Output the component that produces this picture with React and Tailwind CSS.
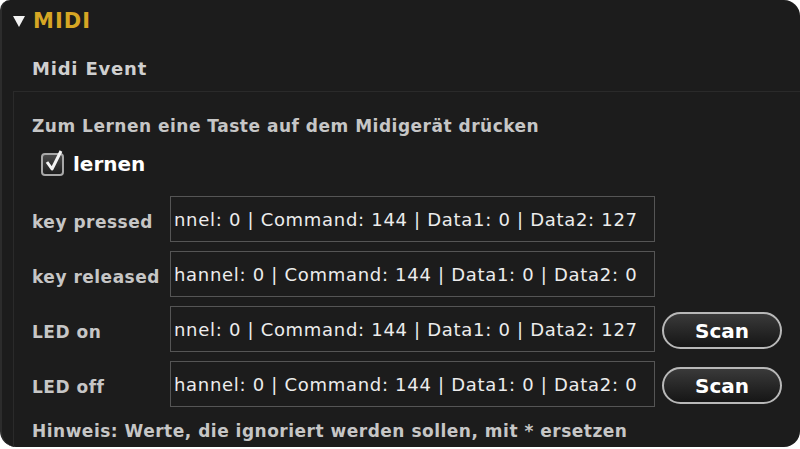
import React from 'react';

const rows = [
  { label: 'key pressed', value: 'nnel: 0 | Command: 144 | Data1: 0 | Data2: 127', scan: false },
  { label: 'key released', value: 'hannel: 0 | Command: 144 | Data1: 0 | Data2: 0', scan: false },
  { label: 'LED on', value: 'nnel: 0 | Command: 144 | Data1: 0 | Data2: 127', scan: true },
  { label: 'LED off', value: 'hannel: 0 | Command: 144 | Data1: 0 | Data2: 0', scan: true },
];

const ScanButton = () => (
  <button className="ml-[7px] mt-[6px] w-[120px] h-[37px] rounded-full border-2 border-[#b8b8b8] bg-gradient-to-b from-[#3a3a3a] to-[#161616] text-white font-bold text-[20px] leading-none flex items-center justify-center">
    Scan
  </button>
);

export default function App() {
  return (
    <div className="w-[800px] h-[449px] bg-white" style={{ fontFamily: '"DejaVu Sans", Verdana, sans-serif' }}>
      <div className="h-[447px] bg-[#1c1c1c] rounded-[16px] rounded-tl-[10px] border-l-2 border-[#2c2c2c] flex flex-col overflow-hidden">
        {/* Kopf */}
        <div className="h-[40px] flex items-center pl-[11px] pt-[3px]">
          <svg width="12" height="13" viewBox="0 0 12 13" className="mr-[8px]">
            <polygon points="0,1 12,1 6,12" fill="#f2f2f2" />
          </svg>
          <span className="text-[21px] font-bold text-[#d6a624] tracking-[1px]">MIDI</span>
        </div>

        <div className="h-[51px] flex items-center pl-[30px] pt-[5px]">
          <span className="text-[18px] font-bold text-[#cfcfcf] tracking-[0.8px]">Midi Event</span>
        </div>

        <div className="flex-1 ml-[11px] border-t border-l border-[#2a2a2a] pl-[18px] pt-[25px] flex flex-col">
          <div className="h-[20px] flex items-center text-[17px] font-bold text-[#c6c6c6] tracking-[0.5px]">
            Zum Lernen eine Taste auf dem Midigerät drücken
          </div>

          <div className="mt-[15px] h-[24px] flex items-center pl-[9px]">
            <div className="relative w-[23px] h-[23px] rounded-[4px] border-2 border-[#a8a8a8] bg-gradient-to-b from-[#4a4a4a] to-[#1e1e1e]">
              <svg width="20" height="24" viewBox="0 0 20 24" className="absolute left-[1px] top-[-6px]">
                <path d="M3 13 L8 20 L17 2" stroke="#f4f4f4" strokeWidth="3" fill="none" strokeLinejoin="round" />
              </svg>
            </div>
            <span className="ml-[9px] text-[20px] font-bold text-white">lernen</span>
          </div>

          <div className="mt-[20px] flex flex-col gap-[9px]">
            {rows.map((row, index) => (
              <div key={index} className="flex items-start">
                <div className="w-[138px] h-[46px] flex items-center pt-[7px] text-[17px] font-bold text-[#c6c6c6] tracking-[0.5px] whitespace-nowrap">
                  {row.label}
                </div>
                <div className="w-[485px] h-[46px] border border-[#555] flex items-center px-[3px] overflow-hidden whitespace-nowrap text-[18px] tracking-[0.7px] text-[#ececec]">
                  {row.value}
                </div>
                {row.scan && <ScanButton />}
              </div>
            ))}
          </div>

          <div className="mt-[15px] h-[20px] flex items-center text-[17px] font-bold text-[#c6c6c6] tracking-[0.5px]">
            Hinweis: Werte, die ignoriert werden sollen, mit * ersetzen
          </div>
        </div>
      </div>
    </div>
  );
}
